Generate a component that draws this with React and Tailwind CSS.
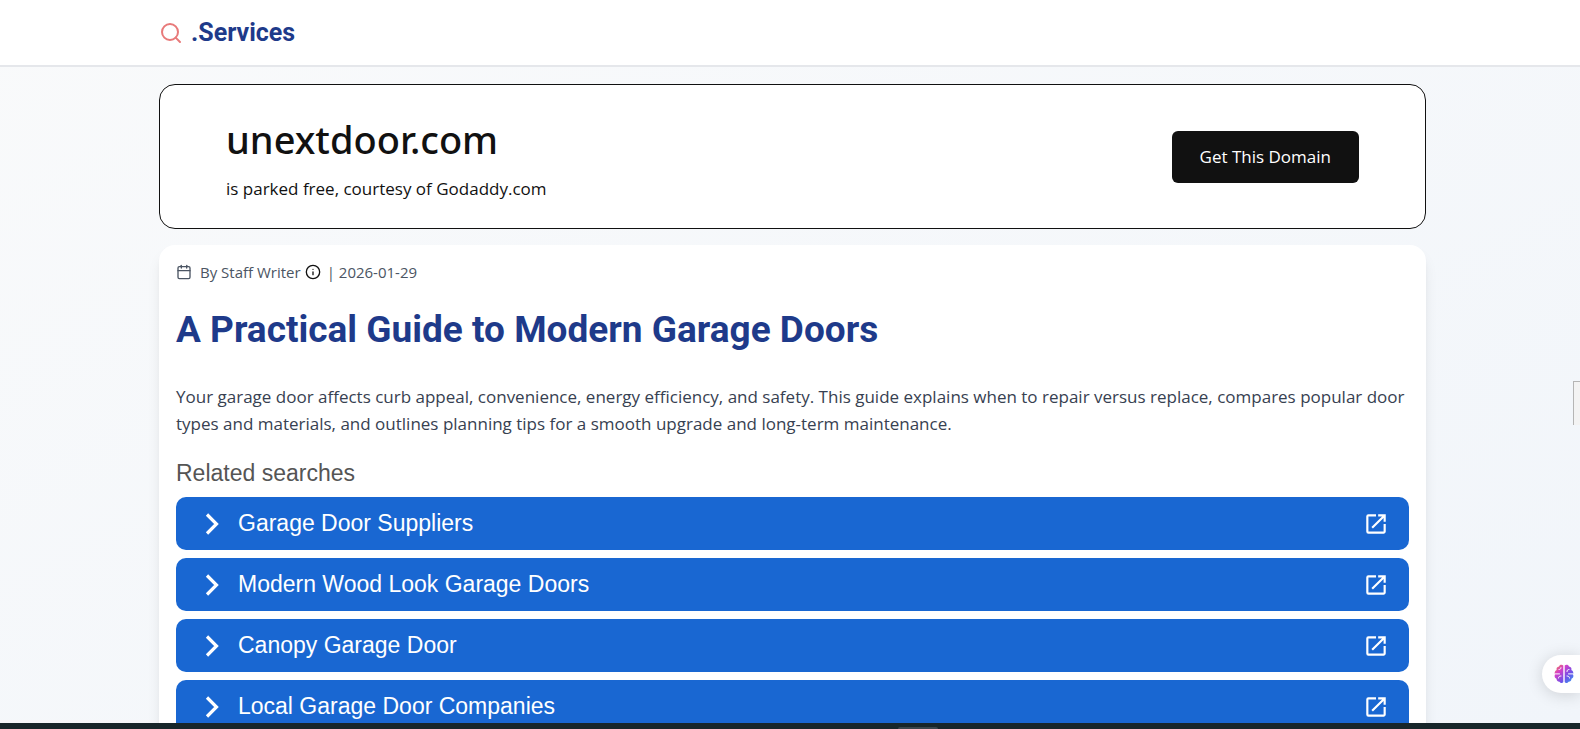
import React from 'react'
import { Search, Calendar, Info } from 'lucide-react'
import { MdOutlineOpenInNew } from 'react-icons/md'

const searches = [
    'Garage Door Suppliers',
    'Modern Wood Look Garage Doors',
    'Canopy Garage Door',
    'Local Garage Door Companies',
]

function Header() {
    return (
        <header className="shrink-0 bg-white border-b-2 border-gray-200">
            <div className="pl-[159px] pr-[154px] h-[65px] flex items-center">
                <a href="#" className="flex items-center gap-2">
                    <Search className="w-6 h-6 text-[#e87a7a]" />
                    <span className="font-['Roboto',sans-serif] text-[25px] leading-8 font-bold text-[#1e3a8a]">.Services</span>
                </a>
            </div>
        </header>
    )
}

function DomainBanner() {
    return (
        <section className="flex items-center justify-between bg-white border border-[#111111] rounded-2xl px-[66px] py-[27px]">
            <div className="text-[#111111]">
                <h2 className="font-['Noto_Sans',sans-serif] text-[38px] leading-[54px] font-medium">unextdoor.com</h2>
                <p className="mt-[11px] text-[17px] leading-6">is parked free, courtesy of Godaddy.com</p>
            </div>
            <button className="bg-[#111111] text-white text-[17px] leading-5 px-7 py-4 rounded-md">Get This Domain</button>
        </section>
    )
}

function RelatedSearches() {
    return (
        <div className="mt-5 font-['Liberation_Sans',Arial,sans-serif]">
            <h2 className="text-[23px] leading-8 text-[#555555]">Related searches</h2>
            <ul className="mt-2 flex flex-col gap-2">
                {searches.map((item) => (
                    <li key={item}>
                        <a href="#" className="flex items-center h-[53px] pl-7 pr-5 rounded-[10px] bg-[#1967d2] text-white">
                            <svg viewBox="0 0 16 24" className="w-4 h-6" fill="none" stroke="currentColor" strokeWidth="3.2">
                                <path d="M3 2.5 12.5 12 3 21.5" />
                            </svg>
                            <span className="ml-[18px] flex-1 pb-0.5 text-[23px] leading-7">{item}</span>
                            <MdOutlineOpenInNew className="w-[26px] h-[26px]" />
                        </a>
                    </li>
                ))}
            </ul>
        </div>
    )
}

function Article() {
    return (
        <article className="bg-white rounded-2xl shadow-lg px-[17px] pt-[15px] pb-8">
            <div className="flex items-center text-[15px] leading-6 text-[#4b5563]">
                <Calendar className="w-4 h-4 mr-2" />
                <span>By Staff Writer</span>
                <Info className="w-4 h-4 ml-1 mr-1.5 text-[#111111]" />
                <span>| 2026-01-29</span>
            </div>
            <h1 className="mt-[26px] font-['Roboto',sans-serif] text-[37px] leading-10 font-bold text-[#1e3a8a]">A Practical Guide to Modern Garage Doors</h1>
            <p className="mt-[33px] text-[17px] leading-[27px] text-[#374151]">
                Your garage door affects curb appeal, convenience, energy efficiency, and safety. This guide explains when to repair versus replace, compares popular door types and materials, and outlines planning tips for a smooth upgrade and long-term maintenance.
            </p>
            <RelatedSearches />
        </article>
    )
}

// floating tab stuck to the right edge
function BrainTab() {
    return (
        <button aria-label="Assistant" className="absolute right-0 bottom-9 w-[38px] h-[38px] pl-3 rounded-l-full bg-white shadow-[0_2px_16px_rgba(0,0,0,0.15)]">
            <svg viewBox="0 0 20 20" className="w-5 h-5">
                <defs>
                    <linearGradient id="brain" x1="0" y1="0" x2="1" y2="1">
                        <stop offset="0" stopColor="#f0883e" />
                        <stop offset="0.3" stopColor="#d63fc8" />
                        <stop offset="0.65" stopColor="#7050e8" />
                        <stop offset="1" stopColor="#2fa0f0" />
                    </linearGradient>
                </defs>
                <path fill="url(#brain)" d="M9.3 1.6C8.3.2 5.5.5 5 2.4 3 2.5 2 4.4 2.7 6 .8 6.8.2 9 1 10.5c-.9 1.5-.3 3.7 1.5 4.3 0 2 1.5 3 3 2.9.8 1.5 3 1.8 3.8.4zM10.7 1.6C11.7.2 14.5.5 15 2.4c2 .1 3 2 2.3 3.6 1.9.8 2.5 3 1.7 4.5.9 1.5.3 3.7-1.5 4.3 0 2-1.5 3-3 2.9-.8 1.5-3 1.8-3.8.4z" />
                <path fill="none" stroke="#fff" strokeWidth="1" strokeLinecap="round" d="M1 9.9h4.5M5 5.5c1.5 0 2-.8 2-1.8M4.5 14c0-1.5 1-2 2.5-2M19 9.9h-4.5M15 5.500c-1.500 0-2 .8-2 2M15.500 14c0-1.500-1-2-2.500-2" />
            </svg>
        </button>
    )
}

function App() {
    return (
        <div className="relative h-screen flex flex-col overflow-hidden bg-linear-to-br from-[#f9fafb] to-[#f1f5fa] font-['Open_Sans',sans-serif]">
            <Header />
            <main className="flex-1 min-h-0 overflow-hidden pl-[159px] pr-[154px] pt-[17px] flex flex-col gap-4">
                <DomainBanner />
                <Article />
            </main>
            <footer className="shrink-0 h-1.5 bg-[#17262a] flex items-end justify-center">
                <div className="w-10 h-0.5 ml-64 rounded-t bg-[#3a464c]"></div>
            </footer>
            <div className="absolute right-0 top-[381px] w-[7px] h-11 border-l border-t border-[#b5b5b5] bg-[#f3f3f3]"></div>
            <BrainTab />
        </div>
    )
}

export default App
